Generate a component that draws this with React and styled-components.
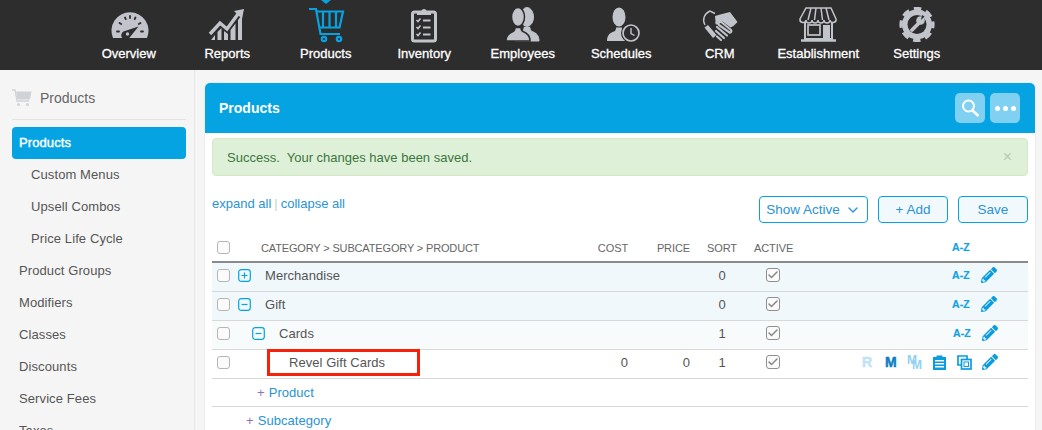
import React from "react";
import styled, { createGlobalStyle } from "styled-components";
import { FaPencilAlt } from "react-icons/fa";
import { ChevronDown, Check } from "lucide-react";

const GREY = "#c1c4ca";
const DARK = "#2d2d2d";
const BLUE = "#05a3e2";

const Global = createGlobalStyle`
  html, body { margin: 0; height: 430px; overflow: hidden; background: #f5f5f5; }
  body { font-family: "Liberation Sans", Arial, sans-serif; font-size: 13px; color: #555; }
  * { box-sizing: border-box; }
`;

const Page = styled.div`display:flex;flex-direction:column;height:430px;overflow:hidden;`;
const TopNav = styled.nav`height:70px;background:${DARK};display:flex;padding-left:79.500px;position:relative;flex:none;`;
const NavMarker = styled.span`
  position:absolute;left:321px;top:0;width:0;height:0;
  border-left:5px solid transparent;border-right:5px solid transparent;border-top:4px solid ${BLUE};
`;
const NavItem = styled.a`
  width:98.500px;display:flex;flex-direction:column;align-items:center;padding-top:7px;
  color:#fff;font-size:13px;-webkit-text-stroke:.3px #fff;
`;
const NavGlyph = styled.svg`width:40px;height:36px;display:block;flex:none;margin-bottom:3px;`;

const Main = styled.div`flex:1;display:flex;min-height:0;`;
const Sidebar = styled.aside`width:195px;flex:none;padding:13px 8px 0 12px;border-right:1px solid #e6e6e6;overflow:hidden;`;
const SideHead = styled.div`
  display:flex;align-items:center;gap:8px;height:37px;font-size:14px;color:#666;
  border-bottom:1px solid #e3e3e3;margin-bottom:7px;padding-bottom:7px;
`;
const SideItem = styled.a`
  display:flex;align-items:center;height:32px;border-radius:4px;flex:none;padding-bottom:2px;
  padding-left:${p => (p.$sub ? 19 : 7)}px;
  background:${p => (p.$active ? BLUE : "transparent")};
  color:${p => (p.$active ? "#fff" : "#555")};
  -webkit-text-stroke:${p => (p.$active ? ".4px #fff" : "0")};
  letter-spacing:.1px;
`;

const Content = styled.main`flex:1;padding:13px 7px 0 10px;min-width:0;`;
const Panel = styled.section`background:#fff;height:400px;border-radius:5px 5px 0 0;box-shadow:0 0 2px rgba(0,0,0,.12);`;
const PanelHead = styled.header`
  height:50px;background:${BLUE};border-radius:5px 5px 0 0;display:flex;align-items:center;
  padding:0 15px 0 14px;gap:5px;
`;
const PanelTitle = styled.h1`margin:0;font-size:14px;font-weight:700;color:#fff;flex:1;`;
const HeadButton = styled.button`
  width:30px;height:30px;border:0;padding:0;border-radius:5px;background:#80d0f1;color:#fff;
  display:flex;align-items:center;justify-content:center;gap:3px;
`;
const Dot = styled.i`width:5px;height:5px;border-radius:50%;background:#fff;display:block;`;
const PanelBody = styled.div`padding:5px 7px 0;`;
const Alert = styled.div`
  height:38px;background:#dff0d8;border:1px solid #d6e9c6;border-radius:4px;color:#3c763d;
  display:flex;align-items:center;justify-content:space-between;padding:0 15px 0 14px;
  white-space:pre;
`;
const Close = styled.span`color:#b9c9b4;font-size:16px;`;
const Toolbar = styled.div`display:flex;align-items:flex-start;margin-top:20px;height:27px;gap:10px;`;
const Expand = styled.div`flex:1;color:#2a93d5;display:flex;gap:3px;`;
const Divider = styled.span`color:#ccc;`;
const ToolButton = styled.button`
  font:inherit;font-size:13.500px;color:#2a93d5;height:27px;width:${p => p.$w}px;
  border:1px solid ${BLUE};border-radius:4px;background:${p => (p.$fill ? "#f2f9fd" : "#fff")};
  display:flex;align-items:center;justify-content:center;gap:5px;padding:0;
`;

const rowGrid = `display:grid;grid-template-columns:378px 38px 62px 64px 38px 1fr;align-items:center;`;
const HeadRow = styled.div`
  ${rowGrid}height:40px;border-bottom:2px solid #8a8a8a;font-size:11px;color:#666;padding-top:11px;
`;
const Row = styled.div`
  ${rowGrid}height:29px;border-bottom:1px solid #d8d8d8;padding-bottom:4px;background:${p => p.$bg || "#fff"};
`;
const NameCell = styled.div`display:flex;align-items:center;padding-left:5px;position:relative;height:100%;`;
const HeadName = styled.span`margin-left:31px;font-size:11px;letter-spacing:-.15px;white-space:nowrap;`;
const Box = styled.span`
  width:13px;height:13px;flex:none;border:1.500px solid #b5b5b5;border-radius:3px;background:#fbfbfb;display:block;
`;
const CheckBox = styled.span`
  width:14px;height:14px;border:1.500px solid #8f8f8f;border-radius:3px;background:#fafafa;color:#888;
  display:flex;align-items:center;justify-content:center;margin:auto;
`;
const Tree = styled.div`display:flex;align-items:center;padding-left:${p => p.$indent}px;gap:14px;`;
const Toggle = styled.svg`width:13px;height:13px;display:block;flex:none;`;
const Label = styled.span`font-size:13px;color:#555;letter-spacing:.05px;`;
const Num = styled.div`text-align:${p => p.$center ? "center" : "right"};color:#555;`;
const HeadNum = styled.div`text-align:${p => p.$center ? "center" : "right"};white-space:nowrap;letter-spacing:-.1px;`;
const Actions = styled.div`
  display:flex;justify-content:flex-end;align-items:center;gap:${p => p.$gap || 10}px;
  padding-right:${p => (p.$shift ? 30 : 31)}px;color:#0b9ce0;
`;
const Az = styled.span`
  font-size:10.500px;font-weight:700;color:#18a0e2;letter-spacing:.1px;width:19px;white-space:nowrap;line-height:1;
  -webkit-text-stroke:.2px #18a0e2;
`;
const AzSpacer = styled.span`width:16px;`;
const Letter = styled.span`
  font-size:14px;font-weight:700;line-height:1;color:${p => p.$c};position:relative;
  width:${p => p.$w || 12}px;-webkit-text-stroke:.5px ${p => p.$c};margin-right:${p => p.$mr || 0}px;
`;
const StackedIcon = styled.span`position:relative;width:15px;height:16px;display:block;flex:none;`;
const Stacked = styled.span`position:absolute;font-size:12px;font-weight:700;color:#8fd2f1;left:${p => p.$x}px;top:${p => p.$y}px;line-height:1;`;
const TightPencil = styled(FaPencilAlt)`margin-left:-1px;`;
const Highlight = styled.span`
  position:absolute;left:55px;top:-1px;width:153px;height:27px;border:3px solid #f5210b;pointer-events:none;
`;
const AddLine = styled.div`
  height:${p => p.$h}px;display:flex;align-items:center;padding-left:${p => p.$pad}px;color:#2a93d5;font-size:13px;gap:4px;letter-spacing:.05px;
  ${p => p.$line ? "border-bottom:1px solid #d8d8d8;" : ""}
`;
const Plus = styled.span`color:#9a6fb5;`;

function SearchGlyph() {
  return (
    <svg width="20" height="20" viewBox="0 0 20 20" fill="none" stroke="#fff">
      <circle cx="8.500" cy="8" r="5.500" strokeWidth="2" />
      <path d="M12.500 12.500L18.500 18" strokeWidth="2.600" />
    </svg>
  );
}
function GaugeIcon() {
  return (
    <NavGlyph viewBox="0 0 40 36">
      <path d="M4 31A18.500 18.500 0 1 1 38 31Z" fill={GREY} />
      <g stroke={DARK} strokeWidth="1.800" strokeLinecap="round">
        <path d="M8 24.500h2M10.500 16l1.700 1M16 10.500l.8 1.600M21 9v2M26.500 10.500l-.8 1.600M31.500 16l-1.700 1M34 24.500h-2" />
      </g>
      <path d="M29.500 19.500L21 30a4.500 4.500 0 1 1-5-6Z" fill={DARK} />
      <circle cx="18.500" cy="27" r="1.700" fill={GREY} />
    </NavGlyph>
  );
}
function ReportsIcon() {
  return (
    <NavGlyph viewBox="0 0 40 36">
      <path d="M3 27L13 16l7 6 11-15" fill="none" stroke={GREY} strokeWidth="3.400" />
      <path d="M27 4l10-2-2 10Z" fill={GREY} />
      <path d="M4 33l4-5v5ZM10.500 33v-8l4-4v12ZM17 33V24l4 3v6ZM23.500 33V23l5-6.500V33ZM31 33V13l4-5v25Z" fill={GREY} />
    </NavGlyph>
  );
}
function CartIcon() {
  return (
    <NavGlyph viewBox="0 0 40 36" fill="none" stroke={BLUE} strokeWidth="2.200">
      <path d="M3 2h7l4.500 25H34" />
      <path d="M10 4.500h27l-3.500 16H13" />
      <path d="M17 5v15M23.500 5v15M30 5v15" />
      <circle cx="18" cy="32" r="2.200" />
      <circle cx="33" cy="32" r="2.200" />
    </NavGlyph>
  );
}
function ClipboardNav() {
  return (
    <NavGlyph viewBox="0 0 40 36">
      <rect x="8.500" y="5" width="23" height="29" rx="2" fill="none" stroke={GREY} strokeWidth="3" />
      <path d="M13 8V4.500h4.500a2.500 2.500 0 0 1 5 0H27V8Z" fill={GREY} />
      <g stroke={GREY} fill="none" strokeWidth="1.600">
        <path d="M12.500 13l1.500 1.500 2.500-3M12.500 20l1.500 1.500 2.500-3M12.500 27l1.500 1.500 2.500-3" />
      </g>
      <path d="M19 12.500h7.500v2H19ZM19 19.500h7.500v2H19ZM19 26.500h7.500v2H19Z" fill={GREY} />
    </NavGlyph>
  );
}
const Person = ({ x = 0 }) => (
  <g transform={`translate(${x} 0)`}>
    <ellipse cx="13" cy="10" rx="6.500" ry="9.500" />
    <path d="M1 34c0-6 3-8 7-9.500 1.500-.6 2-2 2-4h6c0 2 .5 3.400 2 4 4 1.500 7 3.500 7 9.500Z" />
  </g>
);
function EmployeesIcon() {
  return (
    <NavGlyph viewBox="0 0 40 36" fill={GREY}>
      <g stroke={GREY}><Person x={11} /></g>
      <g stroke={DARK} strokeWidth="1.500"><Person x={2} /></g>
    </NavGlyph>
  );
}
function SchedulesIcon() {
  return (
    <NavGlyph viewBox="0 0 40 36" fill={GREY}>
      <Person x={5} />
      <circle cx="30" cy="26" r="10" fill={DARK} />
      <circle cx="30" cy="26" r="8" fill={DARK} stroke={GREY} strokeWidth="1.700" />
      <path d="M30 21v5.500l3.500 2" fill="none" stroke={GREY} strokeWidth="1.400" />
    </NavGlyph>
  );
}
function HandshakeIcon() {
  return (
    <NavGlyph viewBox="0 0 40 36">
      <path d="M5 18C2 13 4 7 10 4l5 2.500" fill="none" stroke={GREY} strokeWidth="1.400" />
      <path d="M4.500 20.500L8 18l8.500 10-3.500 3Z" fill={GREY} />
      <path d="M15 9l7-2 8-2 7.500 10-4 4-3 1.500-8-6-4 3c-2 1-4-1-3-3Z" fill={GREY} />
      <path d="M20 14l11 9c1 1 0 3-1.500 2.500L19 18M17 20l10 8.500M16 24l8 7M21 33l-4-3.500" fill="none" stroke={GREY} strokeWidth="2.200" strokeLinecap="round" />
    </NavGlyph>
  );
}
function StoreIcon() {
  return (
    <NavGlyph viewBox="0 0 40 36" fill="none" stroke={GREY} strokeWidth="1.500">
      <path d="M8 1h25l5 11a3 3 0 0 1-6 1 3 3 0 0 1-6 0 3 3 0 0 1-6 0 3 3 0 0 1-6 0 3 3 0 0 1-6 0 3 3 0 0 1-6-1Z" />
      <path d="M13 1l-3 12M18 1l-1.500 12M23 1l1.500 12M28 1l3 12" />
      <path d="M7 15v17h27V15" strokeWidth="2" />
      <rect x="10" y="18" width="12" height="10" strokeWidth="1.700" />
      <rect x="25" y="18" width="7" height="14" fill={GREY} stroke="none" />
      <path d="M3 33.500h35" strokeWidth="2.500" />
    </NavGlyph>
  );
}
function GearIcon() {
  return (
    <NavGlyph viewBox="0 0 40 36">
      <circle cx="20" cy="17.500" r="15" fill={GREY} />
      <circle cx="20" cy="17.500" r="16" fill="none" stroke={GREY} strokeWidth="3.200" strokeDasharray="7.500 5.070" strokeDashoffset="3.700" />
      <circle cx="20" cy="17.500" r="9.500" fill={DARK} />
      <path d="M15 23l8-8" stroke={GREY} strokeWidth="3.800" strokeLinecap="round" />
      <circle cx="23.500" cy="13.500" r="4.300" fill={GREY} />
      <path d="M24 13l3.500-3.500-2.500-1.500Z" fill={DARK} />
    </NavGlyph>
  );
}
function SideCart() {
  return (
    <svg width="20" height="18" viewBox="0 0 20 18">
      <path d="M0 1h3l2 11h12" fill="none" stroke="#cfd2d6" strokeWidth="1.300" />
      <path d="M4 2.500h15.500l-1.500 8H5.500Z" fill="#cfd2d6" />
      <circle cx="6.500" cy="15.500" r="1.500" fill="#cfd2d6" />
      <circle cx="15.500" cy="15.500" r="1.500" fill="#cfd2d6" />
    </svg>
  );
}
function TreeToggle({ open }) {
  return (
    <Toggle viewBox="0 0 13 13" fill="none" stroke={BLUE} strokeWidth="1.200">
      <rect x=".7" y=".7" width="11.600" height="11.600" rx="2.500" />
      <path d={open ? "M3.500 6.500h6" : "M3.500 6.500h6M6.500 3.500v6"} />
    </Toggle>
  );
}
function ClipAction() {
  return (
    <svg width="13" height="15" viewBox="0 0 13 15">
      <path fillRule="evenodd" d="M0 2h3.500V0.500h6V2H13v13H0ZM2 5v1.500h9V5ZM2 8v1.500h9V8ZM2 11v1.500h9V11Z" fill="#0b9ce0" />
    </svg>
  );
}
function CopyAction() {
  return (
    <svg width="15" height="15" viewBox="0 0 15 15" fill="none" stroke="#0b9ce0" strokeWidth="1.700">
      <path d="M10 4.500V1H1v9h3.500" />
      <rect x="4.500" y="4.500" width="9.500" height="9.500" />
      <rect x="7" y="7" width="4.500" height="4.500" strokeWidth="1" />
    </svg>
  );
}

const navItems = [
  ["Overview", <GaugeIcon />],
  ["Reports", <ReportsIcon />],
  ["Products", <CartIcon />],
  ["Inventory", <ClipboardNav />],
  ["Employees", <EmployeesIcon />],
  ["Schedules", <SchedulesIcon />],
  ["CRM", <HandshakeIcon />],
  ["Establishment", <StoreIcon />],
  ["Settings", <GearIcon />],
];
const sideItems = [
  ["Products", false, true],
  ["Custom Menus", true],
  ["Upsell Combos", true],
  ["Price Life Cycle", true],
  ["Product Groups"],
  ["Modifiers"],
  ["Classes"],
  ["Discounts"],
  ["Service Fees"],
  ["Taxes"],
];
const rows = [
  { name: "Merchandise", toggle: "closed", indent: 8, sort: 0, bg: "#f0f8fc" },
  { name: "Gift", toggle: "open", indent: 8, sort: 0, bg: "#f0f8fc" },
  { name: "Cards", toggle: "open", indent: 22, sort: 1, bg: "#f8fbfb", shift: true },
];

export default function App() {
  return (
    <Page>
      <Global />
      <TopNav>
        <NavMarker />
        {navItems.map(([label, icon]) => (
          <NavItem key={label}>{icon}{label}</NavItem>
        ))}
      </TopNav>
      <Main>
        <Sidebar>
          <SideHead><SideCart />Products</SideHead>
          {sideItems.map(([label, sub, active]) => (
            <SideItem key={label} $sub={sub} $active={active}>{label}</SideItem>
          ))}
        </Sidebar>
        <Content>
          <Panel>
            <PanelHead>
              <PanelTitle>Products</PanelTitle>
              <HeadButton><SearchGlyph /></HeadButton>
              <HeadButton><Dot /><Dot /><Dot /></HeadButton>
            </PanelHead>
            <PanelBody>
              <Alert>{"Success.  Your changes have been saved."}<Close>×</Close></Alert>
              <Toolbar>
                <Expand>expand all <Divider>|</Divider> collapse all</Expand>
                <ToolButton $w={109}>Show Active <ChevronDown size={16} /></ToolButton>
                <ToolButton $w={70} $fill>+ Add</ToolButton>
                <ToolButton $w={70} $fill>Save</ToolButton>
              </Toolbar>
              <HeadRow>
                <NameCell><Box /><HeadName>CATEGORY &gt; SUBCATEGORY &gt; PRODUCT</HeadName></NameCell>
                <HeadNum>COST</HeadNum>
                <HeadNum>PRICE</HeadNum>
                <HeadNum $center>SORT</HeadNum>
                <HeadNum $center>ACTIVE</HeadNum>
                <Actions><Az>A-Z</Az><AzSpacer /></Actions>
              </HeadRow>
              {rows.map(r => (
                <Row key={r.name} $bg={r.bg}>
                  <NameCell>
                    <Box />
                    <Tree $indent={r.indent}><TreeToggle open={r.toggle === "open"} /><Label>{r.name}</Label></Tree>
                  </NameCell>
                  <Num />
                  <Num />
                  <Num $center>{r.sort}</Num>
                  <CheckBox><Check size={12} strokeWidth={3} /></CheckBox>
                  <Actions $shift={r.shift}><Az>A-Z</Az><FaPencilAlt size={16} /></Actions>
                </Row>
              ))}
              <Row>
                <NameCell>
                  <Box />
                  <Tree $indent={59}><Label>Revel Gift Cards</Label></Tree>
                  <Highlight />
                </NameCell>
                <Num>0</Num>
                <Num>0</Num>
                <Num $center>1</Num>
                <CheckBox><Check size={12} strokeWidth={3} /></CheckBox>
                <Actions $shift $gap={11}>
                  <Letter $c="#bfe3f5">R</Letter>
                  <Letter $c="#0a7fc2" $mr={-1}>M</Letter>
                  <StackedIcon>
                    <Stacked $x={0} $y={0}>M</Stacked>
                    <Stacked $x={5} $y={5}>M</Stacked>
                  </StackedIcon>
                  <ClipAction />
                  <CopyAction />
                  <TightPencil size={16} />
                </Actions>
              </Row>
              <AddLine $h={28} $pad={45} $line><Plus>+</Plus> Product</AddLine>
              <AddLine $h={27} $pad={34}><Plus>+</Plus> Subcategory</AddLine>
            </PanelBody>
          </Panel>
        </Content>
      </Main>
    </Page>
  );
}
